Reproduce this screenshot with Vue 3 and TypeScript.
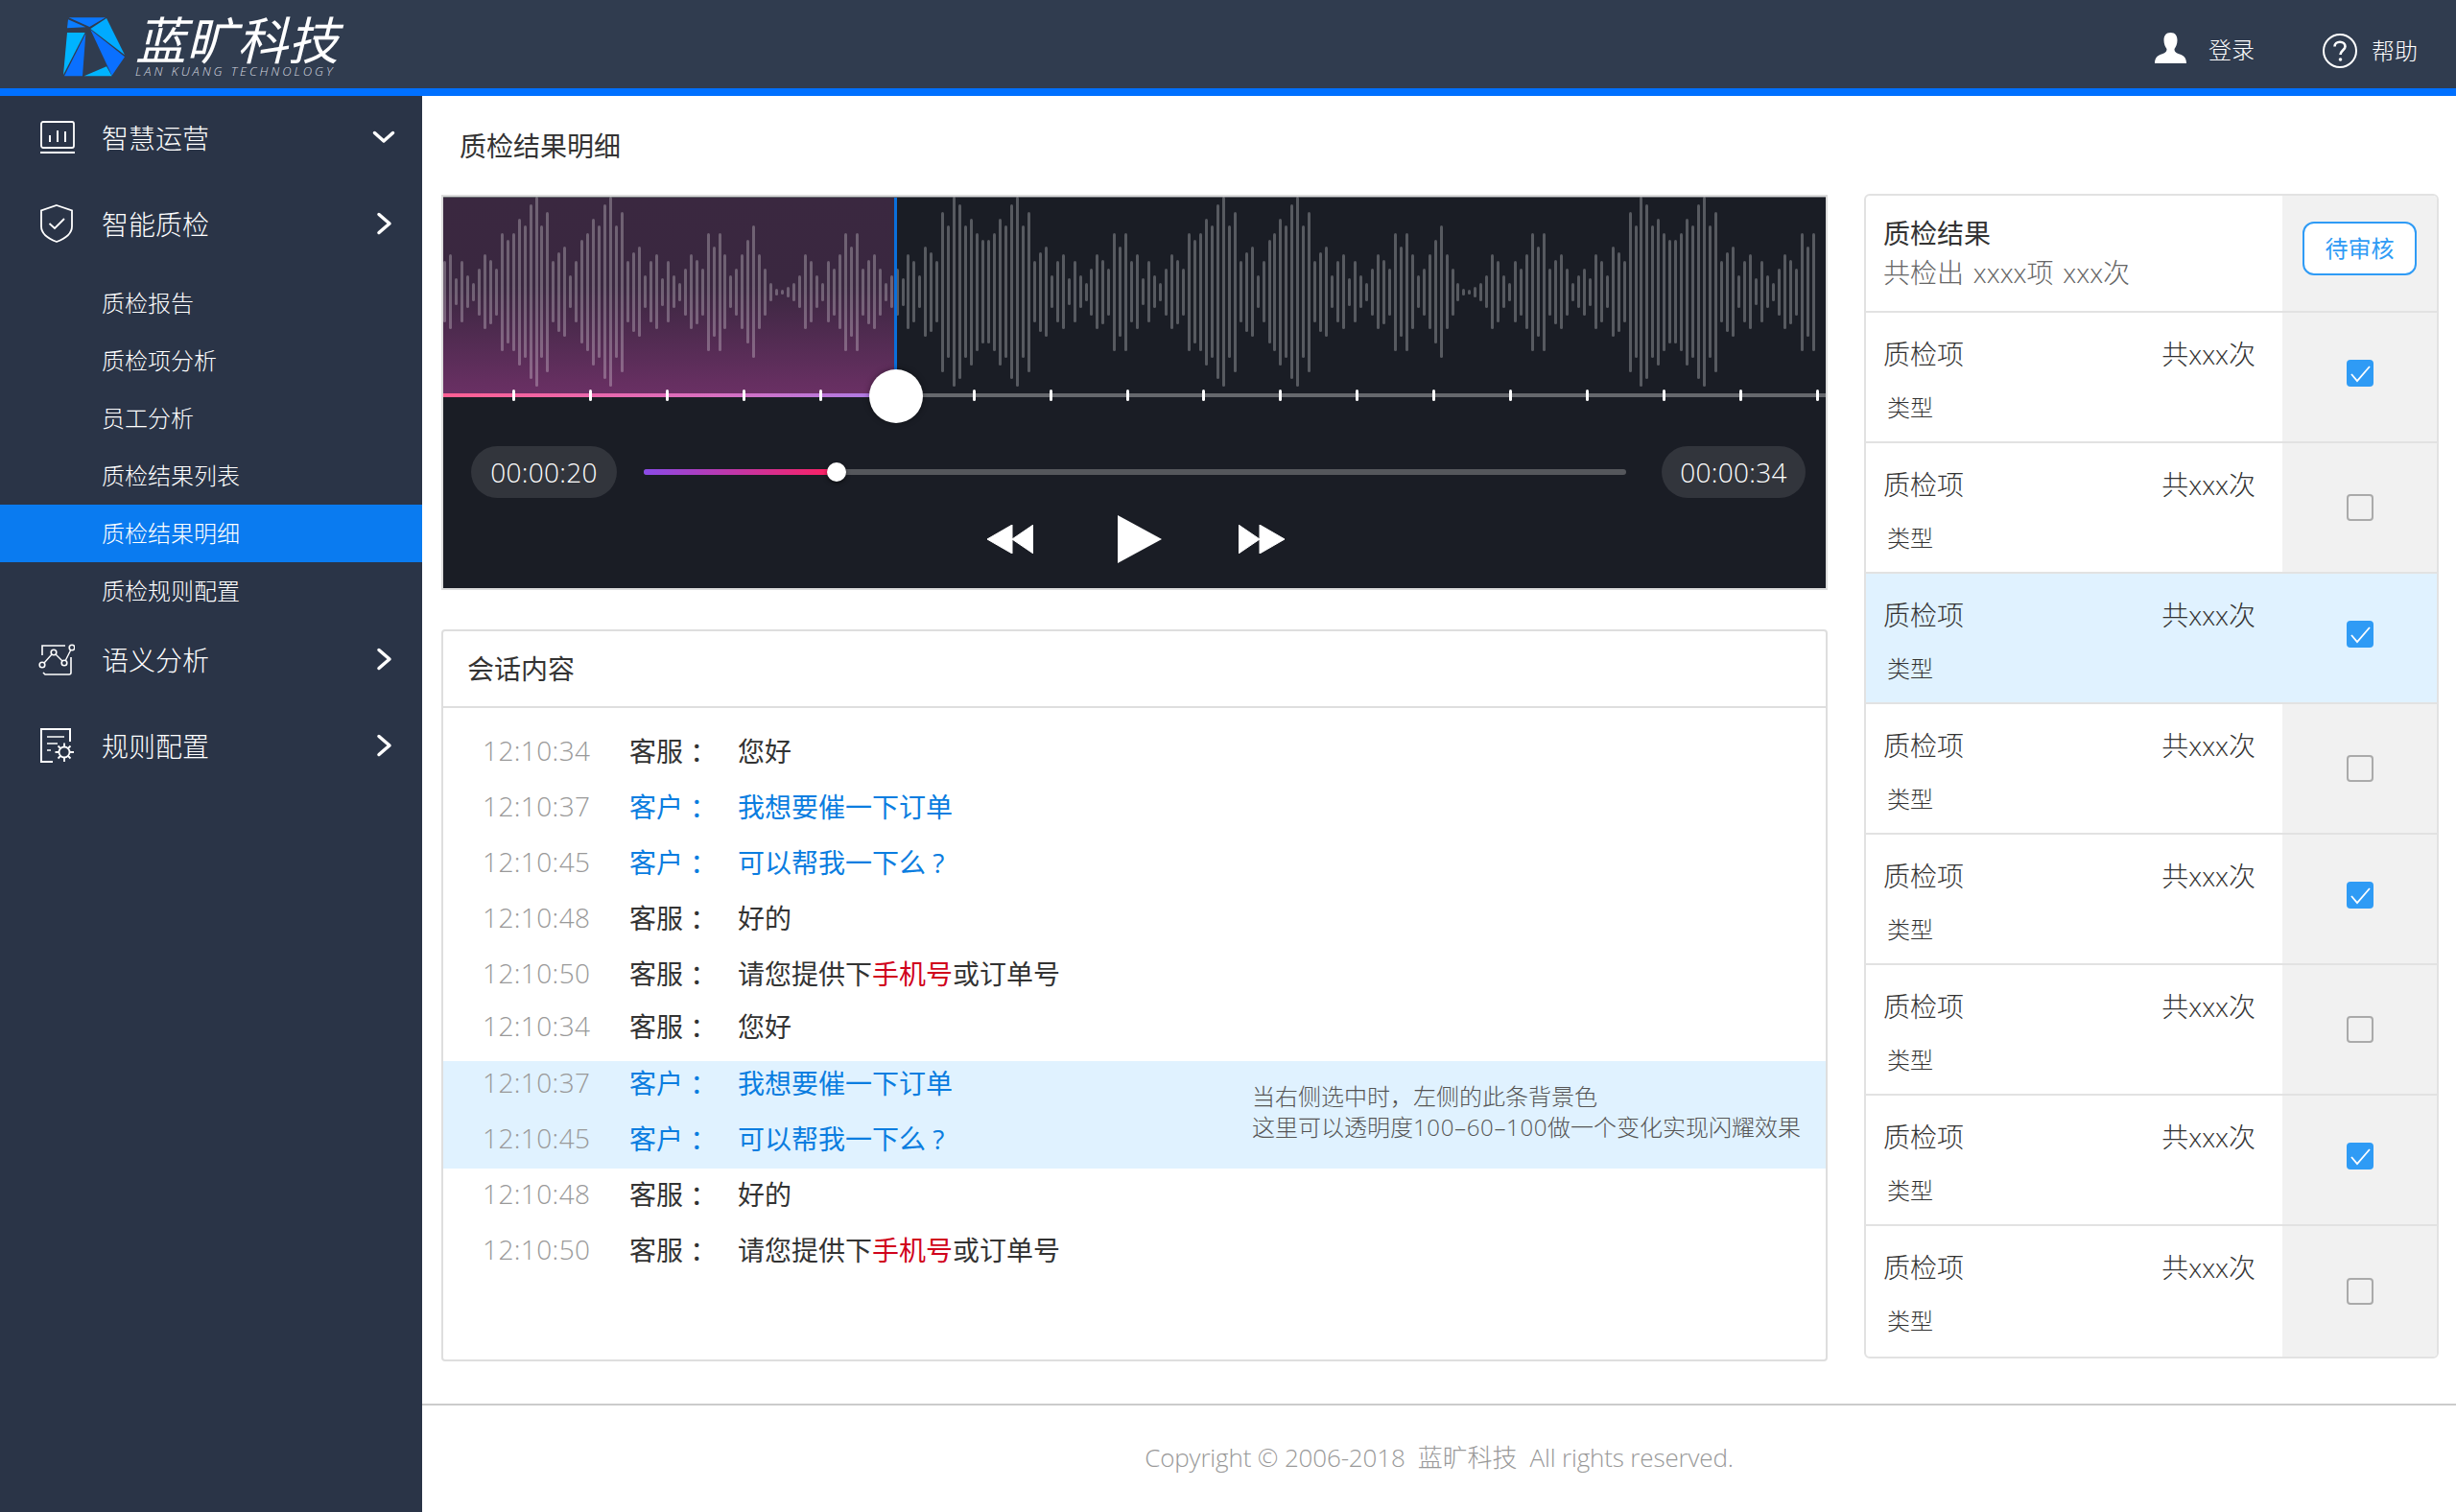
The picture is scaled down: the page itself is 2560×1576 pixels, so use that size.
<script setup lang="ts">
import { computed } from 'vue'

interface SubItem { label: string; active?: boolean }
const subItems: SubItem[] = [
  { label: '质检报告' },
  { label: '质检项分析' },
  { label: '员工分析' },
  { label: '质检结果列表' },
  { label: '质检结果明细', active: true },
  { label: '质检规则配置' },
]

const pattern: number[] = [
  64, 78, 28, 64, 34, 19, 49, 78, 67, 49, 123, 108, 123, 153, 138, 182, 198, 138, 167, 64,
  83, 94, 34, 64, 108, 123, 153, 138, 182, 198, 138, 167, 64, 83, 94, 34, 64, 78, 29, 64,
  34, 19, 49, 78, 67, 49, 123, 94, 123, 78, 34, 49, 78, 108, 138, 78, 49, 19, 7, 5,
  11, 19, 34, 78, 64, 34, 19, 64, 49, 78, 123, 94, 123, 49, 67, 78, 49, 19, 34, 49,
  29, 78, 64, 34, 94, 83, 64, 167, 138, 198, 182, 138, 153, 123, 108, 108, 123, 153, 138, 182,
  198, 138, 167, 64, 83, 94, 34, 64, 78, 28, 64, 34, 19, 49, 78, 67, 49, 123, 94, 123,
]
const bars = computed<number[]>(() => [...pattern, ...pattern])
const ticks: number[] = Array.from({ length: 18 }, (_, i) => i)

interface ChatLine { time: string; role: string; customer: boolean; parts: { t: string; red?: boolean }[]; pull?: boolean }
const ask: { t: string }[] = [{ t: '我想要催一下订单' }]
const can: { t: string }[] = [{ t: '可以帮我一下么\u00a0?' }]
const phone = [{ t: '请您提供下' }, { t: '手机号', red: true }, { t: '或订单号' }]
const firstLines: ChatLine[] = [
  { time: '12:10:34', role: '客服', customer: false, parts: [{ t: '您好' }] },
  { time: '12:10:37', role: '客户', customer: true, parts: ask },
  { time: '12:10:45', role: '客户', customer: true, parts: can },
  { time: '12:10:48', role: '客服', customer: false, parts: [{ t: '好的' }] },
  { time: '12:10:50', role: '客服', customer: false, parts: phone },
  { time: '12:10:34', role: '客服', customer: false, parts: [{ t: '您好' }], pull: true },
]
const hlLines: ChatLine[] = [
  { time: '12:10:37', role: '客户', customer: true, parts: ask },
  { time: '12:10:45', role: '客户', customer: true, parts: can },
]
const lastLines: ChatLine[] = [
  { time: '12:10:48', role: '客服', customer: false, parts: [{ t: '好的' }], pull: true },
  { time: '12:10:50', role: '客服', customer: false, parts: phone },
]

interface Row { checked: boolean; hl: boolean }
const rows: Row[] = [
  { checked: true, hl: false },
  { checked: false, hl: false },
  { checked: true, hl: true },
  { checked: false, hl: false },
  { checked: true, hl: false },
  { checked: false, hl: false },
  { checked: true, hl: false },
  { checked: false, hl: false },
]
</script>

<template>
  <div class="page">
    <header class="top">
      <div class="brand">
        <svg class="logo" viewBox="0 0 270 234" width="90" height="78">
          <polygon points="47,25 162,25 112,54" fill="#0a78ff" />
          <polygon points="45,31 100,55 42,58" fill="#0a7dff" />
          <polygon points="165,27 222,142 115,60" fill="#00aaff" />
          <polygon points="115,63 222,148 182,206" fill="#0a70ff" />
          <polygon points="95,208 165,178 182,208" fill="#00b4ff" />
          <polygon points="42,72 98,72 30,204" fill="#00b4ff" />
          <polygon points="100,75 90,208 33,208" fill="#0a70ff" />
        </svg>
        <div class="brand-text">
          <div class="brand-cn">蓝旷科技</div>
          <div class="brand-en">LAN KUANG TECHNOLOGY</div>
        </div>
      </div>
      <div class="top-right">
        <svg class="ico-user" viewBox="0 0 33 32" width="33" height="32">
          <path d="M16.500 0C11.500 0 9.500 3.500 9.500 8C9.500 12 11 15 12.500 17C12.500 20 11 21 7 22.500C3 24 0 26 0 32H33C33 26 30 24 26 22.500C22 21 20.500 20 20.500 17C22 15 23.500 12 23.500 8C23.500 3.500 21.500 0 16.500 0Z" fill="#fff" />
        </svg>
        <span class="login">登录</span>
        <svg class="ico-help" viewBox="0 0 38 38" width="38" height="38">
          <circle cx="19" cy="19" r="17" fill="none" stroke="#fff" stroke-width="2" />
          <path d="M13.500 14.500C13.500 11.500 16 9.800 19 9.800C22 9.800 24.500 11.700 24.500 14.500C24.500 18 19.500 18.500 19.500 23" fill="none" stroke="#fff" stroke-width="2.600" />
          <circle cx="19.500" cy="28" r="1.800" fill="#fff" />
        </svg>
        <span class="help">帮助</span>
      </div>
    </header>

    <div class="body">
      <aside class="side">
        <div class="nav-item first">
          <svg class="nav-ico" viewBox="0 0 36 34" width="36" height="34">
            <rect x="1" y="1" width="34" height="27" rx="2" fill="none" stroke="#fff" stroke-width="1.800" />
            <path d="M0 33H36" stroke="#fff" stroke-width="2" />
            <path d="M10 15V22M18 10V22M26 11V22" stroke="#fff" stroke-width="2" />
          </svg>
          <span>智慧运营</span>
          <svg class="chev" viewBox="0 0 24 14" width="24" height="14">
            <path d="M2.500 2.500L12 11L21.500 2.500" fill="none" stroke="#fff" stroke-width="3.500" stroke-linecap="round" stroke-linejoin="round" />
          </svg>
        </div>
        <div class="nav-item">
          <svg class="nav-ico" viewBox="0 0 36 40" width="36" height="40">
            <path d="M17 1L33 6.500V23C33 31 25 36 17 39C9 36 1 31 1 23V6.500Z" fill="none" stroke="#fff" stroke-width="1.800" />
            <path d="M9.500 20L15 25L25 15" fill="none" stroke="#fff" stroke-width="1.800" />
          </svg>
          <span>智能质检</span>
          <svg class="chev" viewBox="0 0 24 24" width="24" height="24">
            <path d="M7 2.500L18 12L7 21.500" fill="none" stroke="#fff" stroke-width="3.500" stroke-linecap="round" stroke-linejoin="round" />
          </svg>
        </div>
        <ul class="sub">
          <li v-for="s in subItems" :key="s.label" :class="{ active: s.active }">{{ s.label }}</li>
        </ul>
        <div class="nav-item">
          <svg class="nav-ico wide" viewBox="0 0 38 34" width="38" height="34">
            <path d="M4 13V3H28M34 15V31C34 32 33.500 33 32 33H7L5 31" fill="none" stroke="#fff" stroke-width="1.600" />
            <circle cx="16" cy="10" r="2.800" fill="none" stroke="#fff" stroke-width="1.600" />
            <circle cx="27" cy="21" r="2.800" fill="none" stroke="#fff" stroke-width="1.600" />
            <circle cx="35" cy="5" r="2.800" fill="none" stroke="#fff" stroke-width="1.600" />
            <circle cx="4" cy="23" r="2.800" fill="none" stroke="#fff" stroke-width="1.600" />
            <path d="M6 21L14 12M18 12L25 19M28.500 18L33.500 8" fill="none" stroke="#fff" stroke-width="1.400" />
          </svg>
          <span>语义分析</span>
          <svg class="chev" viewBox="0 0 24 24" width="24" height="24">
            <path d="M7 2.500L18 12L7 21.500" fill="none" stroke="#fff" stroke-width="3.500" stroke-linecap="round" stroke-linejoin="round" />
          </svg>
        </div>
        <div class="nav-item">
          <svg class="nav-ico" viewBox="0 0 36 36" width="36" height="36">
            <path d="M31 14V1H1V35H13" fill="none" stroke="#fff" stroke-width="2" />
            <path d="M7 9H25M7 16H18M7 23H11" stroke="#fff" stroke-width="1.600" />
            <circle cx="25" cy="25" r="5.500" fill="none" stroke="#fff" stroke-width="1.800" />
            <path d="M25 15.500V19.500M25 30.500V35M15.500 25H19.500M30.500 25H35M18.500 18.500L21 21M29 29L31.500 31.500M31.500 18.500L29 21M21 29L18.500 31.500" stroke="#fff" stroke-width="1.800" />
          </svg>
          <span>规则配置</span>
          <svg class="chev" viewBox="0 0 24 24" width="24" height="24">
            <path d="M7 2.500L18 12L7 21.500" fill="none" stroke="#fff" stroke-width="3.500" stroke-linecap="round" stroke-linejoin="round" />
          </svg>
        </div>
      </aside>

      <main class="main">
        <div class="title">质检结果明细</div>
        <div class="columns">
          <div class="left">
            <section class="player">
              <div class="wave">
                <div class="played"></div>
                <div class="bars">
                  <i v-for="(h, i) in bars" :key="i" :style="{ height: h + 'px' }"></i>
                </div>
                <div class="cursor"></div>
                <div class="track">
                  <div class="track-fill"></div>
                  <div class="ticks"><b v-for="t in ticks" :key="t"></b></div>
                </div>
                <div class="handle"></div>
              </div>
              <div class="timeline">
                <span class="pill pill-a">00:00:20</span>
                <div class="slider">
                  <div class="slider-fill"></div>
                  <div class="slider-knob"></div>
                </div>
                <span class="pill pill-b">00:00:34</span>
              </div>
              <div class="controls">
                <svg viewBox="0 0 48 30" width="48" height="30">
                  <path d="M0 15L26 0V15L48 0V30L26 15V30Z" fill="#fff" stroke="#fff" stroke-linejoin="round" />
                </svg>
                <svg class="play" viewBox="0 0 46 50" width="46" height="50"><polygon points="0,0 46,25 0,50" fill="#fff" /></svg>
                <svg viewBox="0 0 48 30" width="48" height="30">
                  <path d="M48 15L22 0V15L0 0V30L22 15V30Z" fill="#fff" stroke="#fff" stroke-linejoin="round" />
                </svg>
              </div>
            </section>

            <section class="chat">
              <div class="chat-head">会话内容</div>
              <div class="chat-body">
                <div v-for="(l, i) in firstLines" :key="'a' + i" class="line" :class="{ pull: l.pull }">
                  <span class="time">{{ l.time }}</span>
                  <span class="role" :class="{ blue: l.customer }">{{ l.role }}&nbsp;：</span>
                  <span class="msg" :class="{ blue: l.customer }"><template v-for="p in l.parts" :key="p.t"><em v-if="p.red">{{ p.t }}</em><template v-else>{{ p.t }}</template></template></span>
                </div>
                <div class="hl">
                  <div class="hl-rows">
                    <div v-for="(l, i) in hlLines" :key="'h' + i" class="line">
                      <span class="time">{{ l.time }}</span>
                      <span class="role blue">{{ l.role }}&nbsp;：</span>
                      <span class="msg blue">{{ l.parts[0].t }}</span>
                    </div>
                  </div>
                  <div class="note">当右侧选中时，左侧的此条背景色<br />这里可以透明度<span class="nums">100–60–100</span>做一个变化实现闪耀效果</div>
                </div>
                <div v-for="(l, i) in lastLines" :key="'z' + i" class="line" :class="{ pull: l.pull }">
                  <span class="time">{{ l.time }}</span>
                  <span class="role">{{ l.role }}&nbsp;：</span>
                  <span class="msg"><template v-for="p in l.parts" :key="p.t"><em v-if="p.red">{{ p.t }}</em><template v-else>{{ p.t }}</template></template></span>
                </div>
              </div>
            </section>
          </div>

          <section class="result">
            <div class="r-row r-head">
              <div class="r-info">
                <div class="r-title">质检结果</div>
                <div class="r-sum">共检出 xxxx项 xxx次</div>
              </div>
              <div class="r-act"><span class="pending">待审核</span></div>
            </div>
            <div v-for="(r, i) in rows" :key="i" class="r-row r-item" :class="{ hl2: r.hl }">
              <div class="r-info">
                <div class="r-line"><span>质检项</span><span>共xxx次</span></div>
                <div class="r-type">类型</div>
              </div>
              <div class="r-act">
                <span class="box" :class="{ on: r.checked }">
                  <svg v-if="r.checked" viewBox="0 0 28 28" width="28" height="28">
                    <path d="M5 15L11 22L24 7" fill="none" stroke="#fff" stroke-width="1.800" />
                  </svg>
                </span>
              </div>
            </div>
          </section>
        </div>
        <footer class="foot">Copyright © 2006-2018&nbsp;&nbsp;蓝旷科技&nbsp;&nbsp;All rights reserved.</footer>
      </main>
    </div>
  </div>
</template>

<style>
html, body { margin: 0; background: #fff; }
</style>

<style scoped>
.page {
  width: 2560px;
  height: 1576px;
  display: flex;
  flex-direction: column;
  overflow: hidden;
  font-family: "Open Sans", "Noto Sans CJK SC", sans-serif;
  font-weight: 400;
  color: #333;
}
.top {
  flex: 0 0 100px;
  box-sizing: border-box;
  border-bottom: 8px solid #0070ff;
  background: #303c4f;
  display: flex;
  justify-content: space-between;
}
.brand { display: flex; padding-left: 56px; }
.logo { margin-top: 10px; }
.brand-text { margin-left: -5px; color: #fff; font-family: "Noto Sans CJK SC", sans-serif; }
.brand-cn {
  margin-top: 14px;
  font-size: 53px;
  line-height: 50px;
  font-style: italic;
  font-weight: 400;
  white-space: nowrap;
}
.brand-en {
  margin-top: 2px;
  font-family: "Open Sans", sans-serif;
  font-weight: 300;
  font-size: 13px;
  line-height: 16px;
  font-style: italic;
  letter-spacing: 2.950px;
  white-space: nowrap;
  color: #d8dbe0;
}
.top-right {
  display: flex;
  align-items: center;
  color: #fff;
  font-size: 24px;
  font-weight: 300;
  padding-right: 40px;
}
.ico-user { margin-top: 8px; }
.login { margin-left: 23px; margin-top: 9px; }
.ico-help { margin-left: 70px; margin-top: 14px; }
.help { margin-left: 14px; margin-top: 10px; }

.body { flex: 1; display: flex; min-height: 0; }
.side { flex: 0 0 440px; background: #2a3447; color: #fff; font-weight: 300; }
.nav-item {
  height: 90px;
  display: flex;
  align-items: center;
  padding-left: 42px;
  font-size: 28px;
  box-sizing: border-box;
  position: relative;
}
.nav-item.first { margin-top: -2px; }
.nav-ico { flex: 0 0 auto; margin-right: 28px; }
.nav-ico.wide { margin-left: -2px; }
.nav-item span { flex: 1; }
.chev { margin-right: 28px; flex: 0 0 auto; }
.sub {
  list-style: none;
  margin: 0 0 -4px;
  padding: 8px 0 0;
  font-size: 24px;
}
.sub li { height: 60px; line-height: 60px; padding-left: 106px; }
.sub li.active { background: #0a7bf0; }

.main { flex: 1; display: flex; flex-direction: column; min-width: 0; }
.title {
  height: 103px;
  line-height: 104px;
  padding-left: 39px;
  font-size: 28px;
}
.columns { display: flex; padding-left: 20px; gap: 38px; height: 1217px; }
.left { flex: 0 0 1445px; }

.player {
  box-sizing: border-box;
  height: 412px;
  border: 2px solid #dcdcdc;
  background: #1a1d25;
  overflow: hidden;
}
.wave {
  position: relative;
  height: 208px;
  border-top: 1px solid #6d7075;
  box-sizing: border-box;
}
.played {
  position: absolute;
  left: 0;
  top: 0;
  width: 472px;
  height: 204px;
  background: linear-gradient(#3a2840 0%, #3a2740 45%, #6a3064 100%);
}
.bars {
  position: relative;
  display: flex;
  align-items: center;
  gap: 2.980px;
  height: 196px;
}
.bars i {
  flex: 0 0 3px;
  border-radius: 1.500px;
  background: rgba(255, 255, 255, 0.27);
}
.cursor {
  position: absolute;
  left: 470px;
  top: 0;
  width: 3px;
  height: 190px;
  background: #0a6fdb;
}
.track {
  position: absolute;
  left: 0;
  right: 0;
  top: 204px;
  height: 4px;
  background: #66686d;
}
.track-fill {
  width: 472px;
  height: 100%;
  background: linear-gradient(90deg, #ff5f93, #d86fc0 60%, #a97ce8);
}
.ticks {
  position: absolute;
  left: 72px;
  right: 7px;
  top: -4px;
  display: flex;
  justify-content: space-between;
}
.ticks b {
  width: 3px;
  height: 12px;
  border-radius: 1.500px;
  background: #fff;
}
.handle {
  position: absolute;
  left: 444px;
  top: 179px;
  width: 56px;
  height: 56px;
  border-radius: 50%;
  background: #fff;
  box-shadow: 0 0 6px rgba(0, 0, 0, 0.4);
  z-index: 1;
}
.timeline {
  display: flex;
  align-items: center;
  padding: 0 21px 0 29px;
  margin-top: 52px;
}
.pill {
  flex: 0 0 auto;
  height: 54px;
  line-height: 54px;
  border-radius: 27px;
  background: #32353c;
  color: #fff;
  font-size: 28px;
  font-weight: 300;
  letter-spacing: 0.300px;
  text-align: center;
}
.pill-a { width: 152px; }
.pill-b { width: 150px; margin-left: 37px; }
.slider {
  position: relative;
  flex: 1;
  margin-left: 28px;
  height: 6px;
  border-radius: 3px;
  background: #55575c;
}
.slider-fill {
  width: 200px;
  height: 100%;
  border-radius: 3px;
  background: linear-gradient(90deg, #8a4be8, #ff2060);
}
.slider-knob {
  position: absolute;
  left: 191px;
  top: -7px;
  width: 20px;
  height: 20px;
  border-radius: 50%;
  background: #fff;
  box-shadow: 0 2px 4px rgba(0, 0, 0, 0.5);
}
.controls {
  display: flex;
  justify-content: center;
  align-items: center;
  margin-top: 18px;
  padding-left: 2px;
}
.play { margin: 0 80px 0 88px; }

.chat {
  box-sizing: border-box;
  margin-top: 41px;
  height: 763px;
  border: 2px solid #dedede;
  border-radius: 4px;
}
.chat-head {
  box-sizing: border-box;
  height: 80px;
  line-height: 78px;
  padding-left: 25px;
  font-size: 28px;
  border-bottom: 2px solid #dedede;
}
.chat-body { padding-top: 15px; }
.line {
  height: 58px;
  display: flex;
  align-items: center;
  padding-left: 41px;
  font-size: 28px;
  white-space: nowrap;
}
.pull { margin-top: -3px; }
.time { flex: 0 0 153px; color: #999; font-weight: 300; letter-spacing: 0.400px; }
.role { flex: 0 0 113px; }
.msg em { font-style: normal; color: #d0021b; }
.blue { color: #0a7de0; }
.hl {
  display: flex;
  height: 112px;
  margin-top: 8px;
  background: #e0f2ff;
}
.hl-rows { flex: 0 0 843px; margin-top: -7px; }
.note {
  margin-top: 21px;
  font-size: 24px;
  font-weight: 300;
  line-height: 32px;
  color: #555;
  white-space: nowrap;
}
.nums { letter-spacing: 0.650px; }

.result {
  flex: 0 0 599px;
  box-sizing: border-box;
  align-self: flex-start;
  margin-top: -1px;
  height: 1214px;
  border: 2px solid #e2e2e2;
  border-radius: 6px;
  overflow: hidden;
}
.r-row { display: flex; border-bottom: 2px solid #e2e2e2; box-sizing: border-box; }
.r-row:last-child { border-bottom: 0; }
.r-head { height: 122px; }
.r-item { height: 136px; }
.r-info { flex: 1; padding: 0 28px 0 18px; min-width: 0; }
.r-act {
  flex: 0 0 161px;
  background: #f1f1f1;
  display: flex;
  align-items: center;
  justify-content: center;
}
.r-title { margin-top: 19px; font-size: 28px; line-height: 40px; }
.r-sum { margin-top: 1px; font-size: 28px; font-weight: 300; line-height: 40px; color: #666; word-spacing: 2.500px; }
.pending {
  box-sizing: border-box;
  width: 119px;
  height: 56px;
  line-height: 52px;
  margin-bottom: 11px;
  text-align: center;
  border: 2px solid #2f9bf5;
  border-radius: 12px;
  background: #fff;
  color: #2f9bf5;
  font-size: 24px;
}
.r-line {
  display: flex;
  justify-content: space-between;
  margin-top: 23px;
  font-size: 28px;
  font-weight: 300;
  line-height: 40px;
}
.r-type { margin-top: 19px; padding-left: 4px; font-size: 24px; font-weight: 300; line-height: 34px; }
.hl2 .r-act { background: transparent; }
.hl2 { background: #e0f2ff; }
.box {
  box-sizing: border-box;
  width: 28px;
  height: 28px;
  border: 2px solid #aaa;
  border-radius: 4px;
  display: block;
}
.box.on {
  border: 0;
  background: #2f9bf5;
  margin-bottom: 8px;
}
.box svg { display: block; }

.foot {
  margin-top: 43px;
  flex: 1;
  border-top: 2px solid #ccc;
  text-align: center;
  font-size: 26px;
  font-weight: 300;
  letter-spacing: -0.150px;
  line-height: 108px;
  color: #999;
}
</style>
